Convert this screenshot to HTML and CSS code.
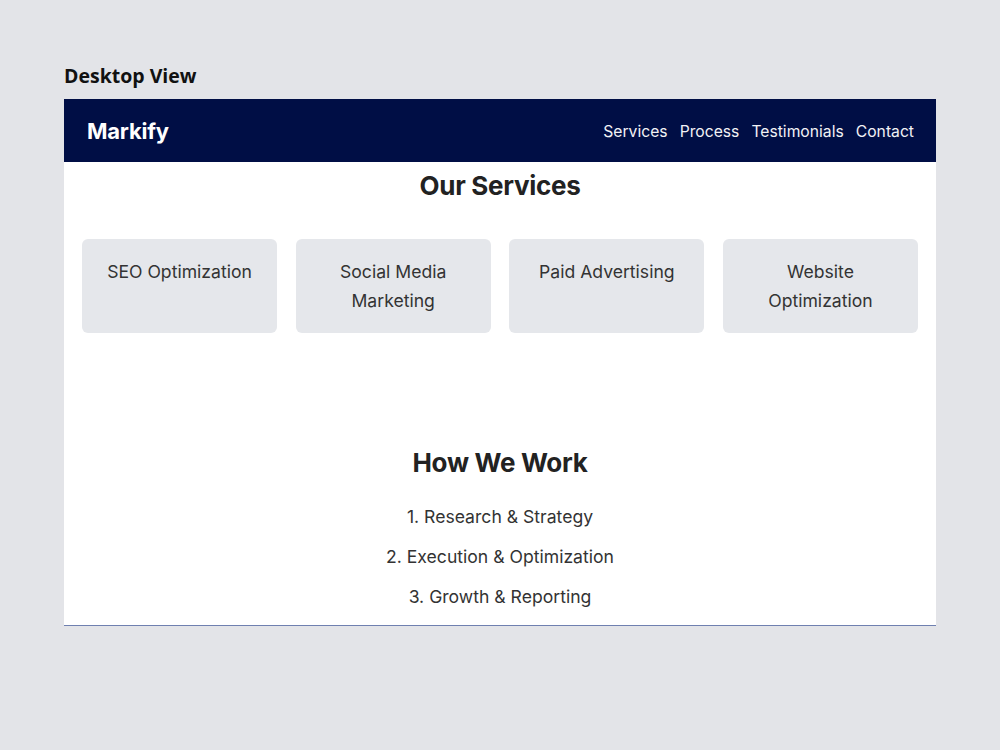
FILE: index.html
```html
<!DOCTYPE html>
<html lang="en">
<head>
  <meta charset="UTF-8">
  <title>Markify - Desktop View</title>
  <link rel="stylesheet" href="styles.css">
</head>
<body>

  <p class="view-label">Desktop View</p>

  <div class="frame">
    <header class="navbar">
      <div class="logo">Markify</div>
      <nav class="nav-links">
        <a href="#services">Services</a>
        <a href="#process">Process</a>
        <a href="#testimonials">Testimonials</a>
        <a href="#contact">Contact</a>
      </nav>
    </header>

    <section id="services" class="services">
      <h2>Our Services</h2>
      <div class="service-grid">
        <div class="service-card">SEO Optimization</div>
        <div class="service-card">Social Media Marketing</div>
        <div class="service-card">Paid Advertising</div>
        <div class="service-card">Website Optimization</div>
      </div>
    </section>

    <section id="process" class="process">
      <h2>How We Work</h2>
      <ul class="steps">
        <li>1. Research &amp; Strategy</li>
        <li>2. Execution &amp; Optimization</li>
        <li>3. Growth &amp; Reporting</li>
      </ul>
    </section>
  </div>

</body>
</html>
```

FILE: styles.css
```css
body {
  margin: 0;
  background-color: #e3e4e8;
  font-family: Inter, "Open Sans", sans-serif;
  color: #2a2a2a;
}

.view-label {
  margin: 0 0 10px;
  padding: 63px 0 0 64px;
  font-family: "Open Sans", sans-serif;
  font-weight: 700;
  font-size: 19.5px;
  line-height: 26px;
  color: #111;
}

.frame {
  width: 872px;
  margin: 0 auto;
  background-color: white;
  border-bottom: 1px solid #6f80b0;
}

.navbar {
  display: flex;
  justify-content: space-between;
  align-items: center;
  height: 63px;
  padding: 0 22px 0 23px;
  background-color: #000e45;
  color: white;
}

.logo {
  font-size: 22px;
  font-weight: 700;
  letter-spacing: -0.2px;
}

.nav-links {
  display: flex;
  gap: 12px;
  padding-top: 2px;
}

.nav-links a {
  color: #f2f2f5;
  text-decoration: none;
  font-size: 15.7px;
}

h2 {
  margin: 0;
  font-size: 26px;
  line-height: 32px;
  font-weight: 700;
  text-align: center;
  color: #222;
  letter-spacing: -0.3px;
}

.services {
  padding: 8px 18px 0;
}

.service-grid {
  display: grid;
  grid-template-columns: repeat(4, 1fr);
  gap: 18.6px;
  margin-top: 37px;
}

.service-card {
  background-color: #e5e7eb;
  border-radius: 6px;
  padding: 19px 20px 18px;
  min-height: 56px;
  font-size: 17.6px;
  line-height: 28.5px;
  text-align: center;
  color: #333;
}

.process {
  padding: 114px 18px 14px;
}

.steps {
  list-style: none;
  margin: 24px 0 0;
  padding: 0;
  text-align: center;
}

.steps li {
  font-size: 17.6px;
  line-height: 28px;
  margin-bottom: 12px;
  color: #333;
}

.steps li:last-child {
  margin-bottom: 0;
}
```
